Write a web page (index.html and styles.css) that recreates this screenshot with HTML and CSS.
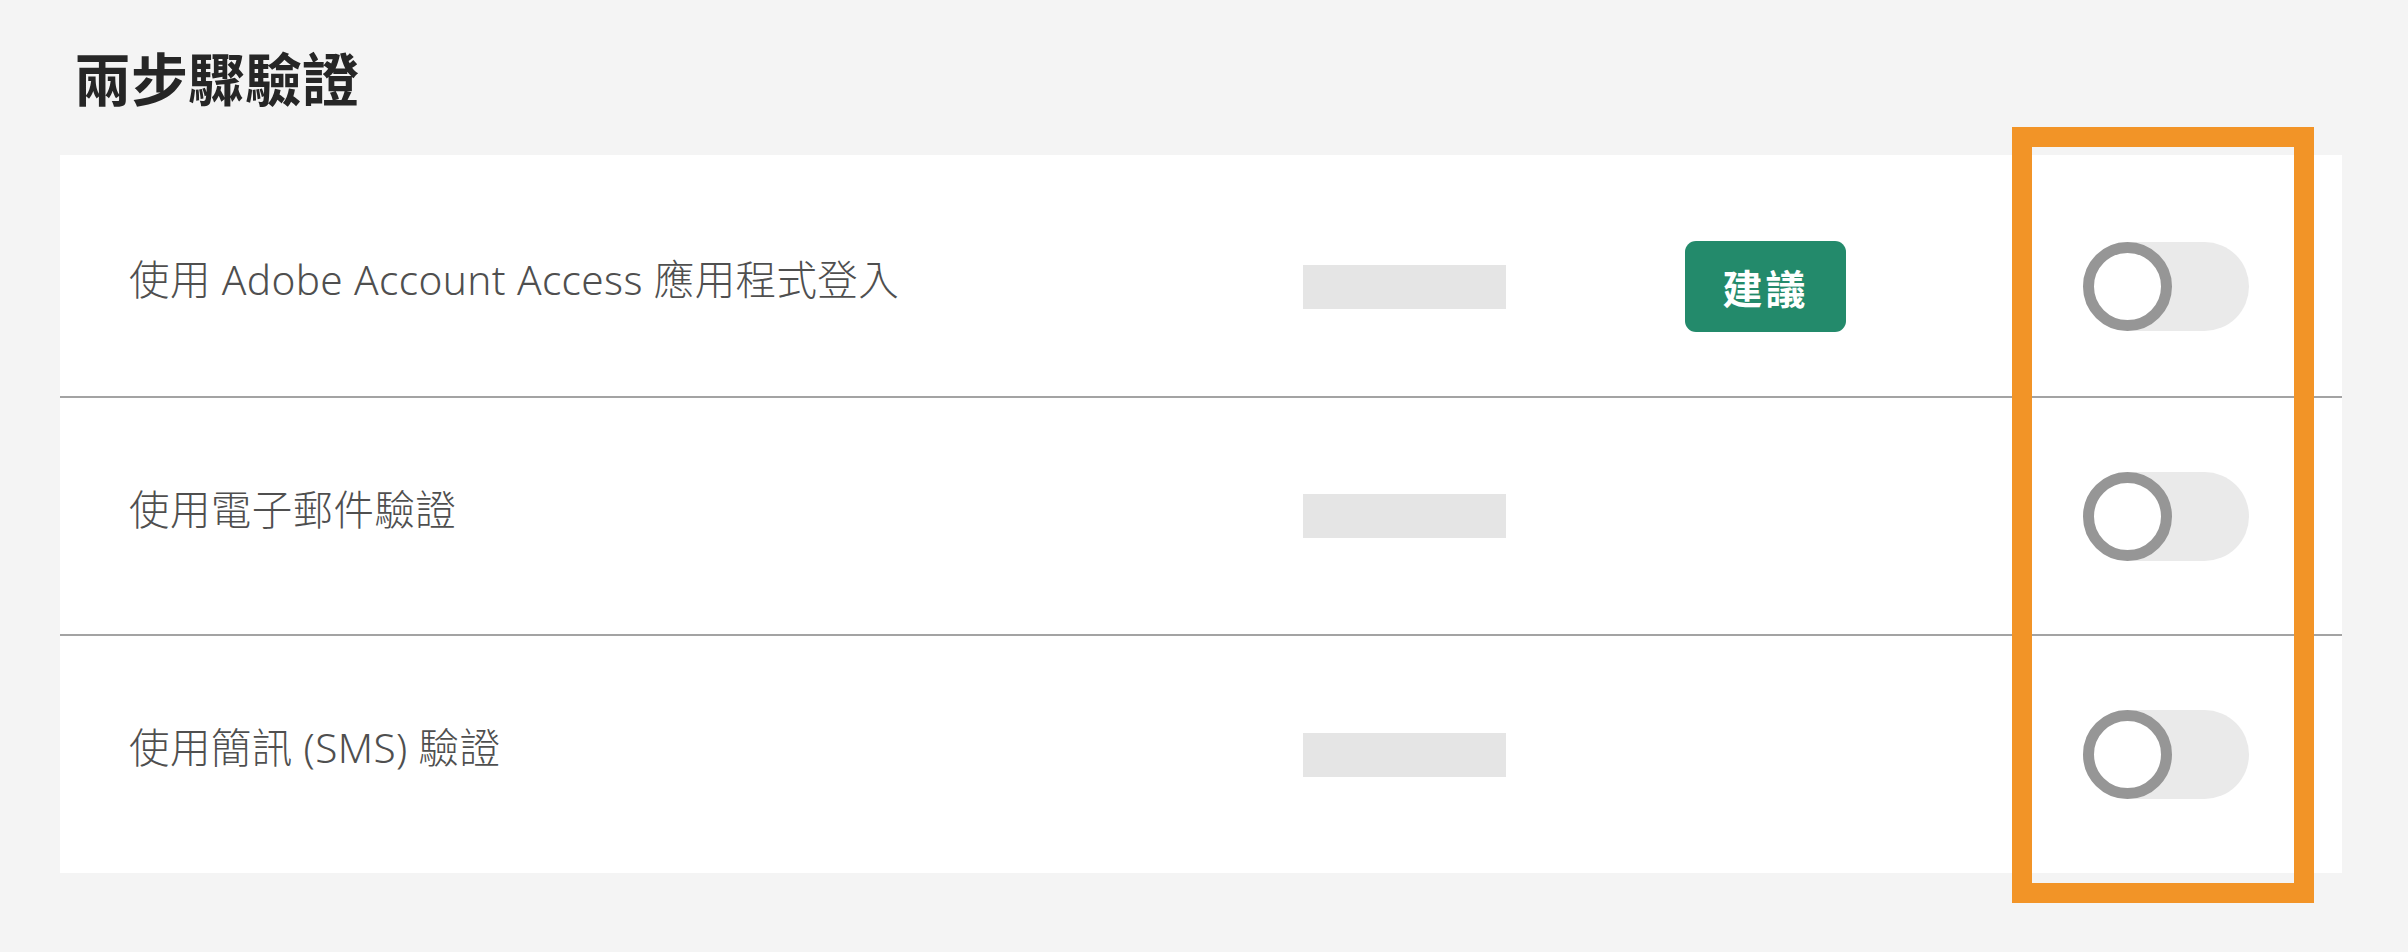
FILE: index.html
```html
<!DOCTYPE html>
<html lang="zh-Hant">
<head>
<meta charset="utf-8">
<title>兩步驟驗證</title>
<link rel="stylesheet" href="styles.css">
</head>
<body>
<main class="page">
  <h1 class="title">兩步驟驗證</h1>
  <section class="card">
    <div class="row row-first">
      <div class="label">使用 Adobe Account Access 應用程式登入</div>
      <div class="status"><span class="placeholder"></span></div>
      <div class="tag"><span class="badge">建議</span></div>
      <div class="switch"><span class="toggle"><span class="knob"></span></span></div>
    </div>
    <div class="row">
      <div class="label">使用電子郵件驗證</div>
      <div class="status"><span class="placeholder"></span></div>
      <div class="tag"></div>
      <div class="switch"><span class="toggle"><span class="knob"></span></span></div>
    </div>
    <div class="row row-last">
      <div class="label">使用簡訊 (SMS) 驗證</div>
      <div class="status"><span class="placeholder"></span></div>
      <div class="tag"></div>
      <div class="switch"><span class="toggle"><span class="knob"></span></span></div>
    </div>
  </section>
  <div class="highlight"></div>
</main>
</body>
</html>
```

FILE: styles.css
```css
* { box-sizing: border-box; }

html, body {
  margin: 0;
  padding: 0;
  background: #f4f4f4;
}

body {
  width: 2408px;
  height: 952px;
  overflow: hidden;
  font-family: "Noto Sans", "Noto Sans CJK TC", sans-serif;
}

.page {
  position: relative;
  padding-top: 46px;
}

.title {
  margin: 0 0 49px 74px;
  font-family: "Noto Sans CJK TC", sans-serif;
  font-size: 57px;
  line-height: 60px;
  font-weight: 700;
  color: #262626;
}

.card {
  margin-left: 60px;
  width: 2282px;
  background: #ffffff;
}

.row {
  display: grid;
  grid-template-columns: 1174px 382px 398px 166px;
  align-items: center;
  padding-left: 69px;
  height: 238px;
  border-bottom: 2px solid #a3a3a3;
}

.row-first {
  height: 243px;
  padding-top: 22px;
}

.row-last {
  height: 237px;
  border-bottom: none;
}

.label {
  font-size: 40.5px;
  font-weight: 300;
  letter-spacing: 0.4px;
  line-height: 1.2;
  color: #4f4f4f;
  margin-top: -12px;
  white-space: nowrap;
}

.placeholder {
  display: block;
  width: 203px;
  height: 44px;
  background: #e5e5e5;
}

.badge {
  display: flex;
  align-items: center;
  justify-content: center;
  width: 161px;
  height: 91px;
  border-radius: 11px;
  background: #238a6b;
  color: #ffffff;
  font-family: "Noto Sans CJK TC", sans-serif;
  font-size: 40px;
  font-weight: 700;
  letter-spacing: 3px;
}

.toggle {
  display: block;
  width: 166px;
  height: 89px;
  border-radius: 45px;
  background: #eaeaea;
}

.knob {
  display: block;
  width: 89px;
  height: 89px;
  border-radius: 50%;
  border: 11px solid #969696;
  background: #ffffff;
}

.highlight {
  position: absolute;
  left: 2012px;
  top: 127px;
  width: 302px;
  height: 776px;
  border: 20px solid #f29427;
}
```
